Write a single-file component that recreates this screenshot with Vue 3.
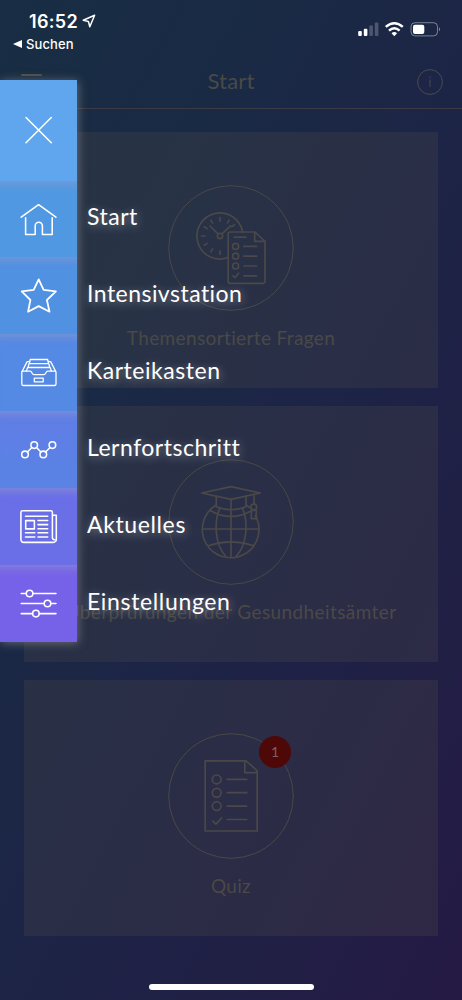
<template>
  <div class="screen">
    <header class="status-bar">
      <div class="status-left">
        <div class="clock">
          <span class="time">16:52</span>
          <svg class="location" width="14" height="14" viewBox="0 0 14 14">
            <path d="M12.6 1.3 1.2 6.2l5.2 1.3 1.4 5.3z" />
          </svg>
        </div>
        <div class="back">
          <svg width="9" height="8" viewBox="0 0 9 8"><path d="M0 4 9 0v8z" fill="#fff" /></svg>
          <span>Suchen</span>
        </div>
      </div>
      <svg class="status-icons" width="84" height="18" viewBox="0 0 84 18">
        <g fill="#fff">
          <rect x="0.2" y="10" width="3.6" height="5" rx="1" />
          <rect x="5.8" y="7.8" width="3.6" height="7.2" rx="1" />
          <rect x="11.3" y="4.6" width="3.6" height="10.4" rx="1" opacity="0.22" />
          <rect x="16.8" y="1.6" width="3.6" height="13.4" rx="1" opacity="0.22" />
          <path d="M36.3 15.2l-2.8-2.9q2.8-2.4 5.6 0z" />
        </g>
        <g fill="none" stroke="#fff" stroke-width="2.5">
          <path d="M27.8 5.9q8.5-7.2 17 0" />
          <path d="M31 9.6q5.3-4.8 10.6 0" />
        </g>
        <rect x="53" y="1.7" width="26.5" height="13.2" rx="4" fill="none" stroke="#fff" opacity="0.42" />
        <rect x="55" y="3.7" width="11.3" height="9.3" rx="2" fill="#fff" />
        <path d="M81 6.3q2 2 0 4z" fill="#fff" opacity="0.5" />
      </svg>
    </header>

    <nav class="title-bar">
      <span class="burger"></span>
      <h1>Start</h1>
      <svg class="info" width="28" height="28" viewBox="0 0 28 28">
        <circle cx="14" cy="14" r="12.4" />
        <path d="M14 11.5v7.5M14 8.6v1.4" />
      </svg>
    </nav>

    <main class="cards">
      <section v-for="card in cards" :key="card.title" class="card">
        <div class="emblem">
          <svg width="126" height="126" viewBox="0 0 126 126">
            <circle class="ring" cx="63" cy="63" r="62.3" />
            <template v-if="card.icon === 'topics'">
              <path d="M60.3 72.4A23 23 0 1 1 74.6 47" />
              <circle cx="52" cy="51" r="2.6" />
              <path d="M50.2 49.2 42 41M53.8 49.2l8.9-8.5" />
              <path
                v-for="tick in ticks"
                :key="tick"
                d="M52 32.7v3.4"
                :transform="`rotate(${tick} 52 51)`"
              />
              <path d="M62 47h25l10 9.3v40.2a1.8 1.8 0 0 1-1.8 1.8H62a1.8 1.8 0 0 1-1.8-1.8V48.8A1.8 1.8 0 0 1 62 47zM86.7 47v9.4H97" />
              <path d="M66.3 52.2h11.4" />
              <g v-for="y in [61.4, 71.2, 81]" :key="y">
                <circle cx="67.6" :cy="y" r="3" />
                <path :d="`M75.8 ${y}h12.8`" />
              </g>
              <path d="M65 90.6l2 2.1 3.6-4.3M75.8 90.8h12.8" />
            </template>
            <template v-else-if="card.icon === 'globe'">
              <path d="M33.7 34 63 27.7 92.3 34 63 40.3z" />
              <path d="M48.3 37.3v10.4Q63 53.8 78 47.7V37.3M63 40.3V98" />
              <path d="M48.3 46a28.3 28.3 0 1 0 39 10.5M78 46l4.6 3" />
              <path d="M34.7 70h56.6M42 51.4q21 11.8 41 0.6M40.3 86.7q22.7-7.5 45.4 0" />
              <path d="M51.6 49.6C46.4 62 46 85 58 97.5M74.6 49.6C79.8 62 80 85 68 97.5" />
              <path d="M86 35.6v9M83.3 51.5h5v8.2h-5z" />
              <circle cx="85.8" cy="48" r="2.9" />
            </template>
            <template v-else>
              <path d="M37.2 27.8H78l11.2 10V98h-52zM76.8 28v11.7h12.4" />
              <g v-for="y in [46.4, 59.7, 73.1]" :key="y">
                <circle cx="48.7" :cy="y" r="4.4" />
                <path :d="`M59.2 ${y}h19.5`" />
              </g>
              <path d="M44.8 88l3 3.2 5.8-6.2M59.2 86.5h19.5" />
            </template>
          </svg>
          <span v-if="card.badge" class="badge">{{ card.badge }}</span>
        </div>
        <h2 :style="{ letterSpacing: card.spacing + 'px' }">{{ card.title }}</h2>
      </section>
    </main>

    <aside class="menu">
      <div class="menu-row close-row">
        <button class="tile close" aria-label="Schließen">
          <svg width="77" height="100" viewBox="0 0 77 100">
            <path d="M26 37.5l25.3 25.3M51.3 37.5 26 62.8" />
          </svg>
        </button>
      </div>
      <div v-for="item in items" :key="item.label" class="menu-row">
        <button class="tile" :class="item.icon" :aria-label="item.label">
          <svg width="77" height="77" viewBox="0 0 77 77">
            <template v-if="item.icon === 'home'">
              <path d="M21.2 36.2 38.6 23.7l17.3 12.5" />
              <path d="M25.6 36.8v16.7h9.6V44.8a3.6 3.6 0 0 1 7.2 0v8.7h9.8V36.8" />
            </template>
            <path
              v-else-if="item.icon === 'star'"
              class="bold"
              d="M38.7 22.4l4.9 10.4 12.3 1.6-9 8.6 2.6 11.7-10.8-5.6-10.6 5.6 2.3-11.7-8.7-8.6 12-1.6z"
            />
            <template v-else-if="item.icon === 'box'">
              <path class="thin" d="M21.8 38.2a1 1 0 0 1 1-1h7.4c1.8 0 1.8 3.5 3.6 3.5H44c1.8 0 1.8-3.5 3.6-3.5h7.4a1 1 0 0 1 1 1v11.7a1.6 1.6 0 0 1-1.6 1.6h-31a1.6 1.6 0 0 1-1.6-1.6z" />
              <path class="thin" d="M22.2 37.3l4.8-9.4 2.5-.6M55.6 37.3l-4.8-9.4-2.5-.6" />
              <path class="thin" d="M29.3 29.7l1-4.2h17.3l1 4.2M28 33.5l1-3.8h19.8l1 3.8M26.4 37.1l1.2-3.6h22.6l1.2 3.6" />
              <path class="thin" d="M34.3 44.2h8.9v3.6h-8.9z" />
            </template>
            <template v-else-if="item.icon === 'progress'">
              <path d="M27.4 41l4.5-4.5M36.5 36.5l4.4 4.5M45.6 41l4.5-4.5" />
              <circle cx="25" cy="43.4" r="3.3" />
              <circle cx="34.2" cy="34.1" r="3.3" />
              <circle cx="43.3" cy="43.4" r="3.3" />
              <circle cx="52.4" cy="34.1" r="3.3" />
            </template>
            <template v-else-if="item.icon === 'news'">
              <path d="M52.4 27.2V24.4a1.6 1.6 0 0 0-1.6-1.6H22.5a1.6 1.6 0 0 0-1.6 1.6v27.2a2.8 2.8 0 0 0 2.8 2.8h29.6a3 3 0 0 0 3-3V27.2h-3.9v22.2q0 2.2 2.2 2.3" />
              <path d="M25.5 28.2h22.2M25.7 32.6h8.7v8.3h-8.7zM38 32.5h9.7M38 36.6h9.7M38 40.7h9.7M38 44.8h9.7M38 48.9h9.7M25.5 44.8h9.3M25.5 48.9h9.3" />
            </template>
            <template v-else>
              <path d="M21.2 28.5h5M32.9 28.5H56M21.2 38.5h23M50.8 38.5H56M21.2 48.6h11.4M39.2 48.6H56" />
              <circle cx="29.6" cy="28.5" r="3.3" />
              <circle cx="47.5" cy="38.5" r="3.3" />
              <circle cx="35.9" cy="48.6" r="3.3" />
            </template>
          </svg>
        </button>
        <span class="label" :style="{ letterSpacing: item.spacing + 'px' }">{{ item.label }}</span>
      </div>
    </aside>

    <div class="home-indicator"></div>
  </div>
</template>

<script setup>
const cards = [
  { title: 'Themensortierte Fragen', icon: 'topics', spacing: 0.37 },
  { title: 'Überprüfungen der Gesundheitsämter', icon: 'globe', spacing: 0.4 },
  { title: 'Quiz', icon: 'quiz', badge: 1, spacing: 0.3 }
]

const items = [
  { label: 'Start', icon: 'home', spacing: 0.5 },
  { label: 'Intensivstation', icon: 'star', spacing: 0.47 },
  { label: 'Karteikasten', icon: 'box', spacing: 0.55 },
  { label: 'Lernfortschritt', icon: 'progress', spacing: 0.5 },
  { label: 'Aktuelles', icon: 'news', spacing: 0.62 },
  { label: 'Einstellungen', icon: 'settings', spacing: 0.65 }
]

// clock marks, in degrees from 12 o'clock
const ticks = [0, 30, 52, 180, 210, 240, 270, 300, 330]
</script>

<style>
body {
  margin: 0;
  background: #1f2144;
}
</style>

<style scoped>
.screen {
  position: relative;
  width: 462px;
  height: 1000px;
  overflow: hidden;
  box-sizing: border-box;
  display: flex;
  flex-direction: column;
  font-family: Lato, 'Liberation Sans', sans-serif;
  background: linear-gradient(118deg, #182e43 0%, #1a2945 32%, #1f2145 68%, #251a44 100%);
}

.status-bar {
  display: flex;
  justify-content: space-between;
  height: 56px;
  color: #fff;
  font-family: Inter, 'Liberation Sans', sans-serif;
}

.status-left {
  padding: 9px 0 0 13px;
}

.clock {
  display: flex;
  align-items: center;
  gap: 4px;
  height: 25px;
  padding-left: 16px;
}

.time {
  font-size: 18px;
  font-weight: 600;
  letter-spacing: 0.3px;
}

.location {
  margin-top: -2px;
}

.location path {
  fill: none;
  stroke: #fff;
  stroke-width: 1.5;
  stroke-linejoin: round;
}

.back {
  display: flex;
  align-items: center;
  gap: 4px;
  height: 20px;
  font-size: 13px;
  font-weight: 500;
  letter-spacing: 0.1px;
}

.status-icons {
  margin: 21px 20px 0 0;
}

.title-bar {
  display: grid;
  grid-template-columns: 60px 1fr 60px;
  align-items: center;
  height: 52px;
  border-bottom: 1px solid #3b3a45;
}

.burger {
  align-self: start;
  width: 21px;
  height: 2px;
  margin: 18px 0 0 21px;
  border-radius: 1px;
  background: #4d4b4b;
}

h1,
h2 {
  margin: 0;
  font-weight: 400;
  color: #4a4947;
  text-align: center;
}

h1 {
  padding-bottom: 3px;
  font-size: 22px;
  letter-spacing: 0.2px;
}

.info {
  justify-self: end;
  margin: 0 18px 1px 0;
  fill: none;
  stroke: #4a4a50;
  stroke-width: 1;
}

.cards {
  display: flex;
  flex-direction: column;
  gap: 18px;
  padding: 22.5px 24px 0;
}

.card {
  display: flex;
  flex-direction: column;
  align-items: center;
  height: 256px;
  background: rgba(82, 78, 72, 0.26);
}

.emblem {
  position: relative;
  width: 126px;
  height: 126px;
  margin-top: 53.2px;
}

.emblem svg {
  display: block;
  fill: none;
  stroke: #4a4848;
  stroke-width: 1.7;
  stroke-linecap: round;
  stroke-linejoin: round;
}

.emblem .ring {
  stroke-width: 1;
}

.badge {
  position: absolute;
  top: 3px;
  right: 3px;
  width: 32px;
  height: 32px;
  border-radius: 50%;
  background: #4e0807;
  color: #80605e;
  font-size: 14px;
  line-height: 32px;
  text-align: center;
}

h2 {
  margin-top: 15.4px;
  font-size: 19px;
  line-height: 24px;
  white-space: nowrap;
}

.menu {
  position: absolute;
  top: 80px;
  left: 0;
  width: 77px;
  box-shadow: 1px 1px 9px rgba(175, 172, 165, 0.5);
}

.menu-row {
  display: flex;
  align-items: center;
  gap: 10px;
  height: 76.9px;
}

.close-row {
  height: 100.5px;
}

.tile {
  flex: none;
  width: 77px;
  height: 100%;
  padding: 0;
  border: 0;
  background: #5099e2;
  box-shadow: inset 0 12px 9px -9px rgba(150, 158, 200, 0.55);
}

.tile svg {
  display: block;
  fill: none;
  stroke: #fff;
  stroke-width: 1.55;
  stroke-linejoin: round;
  stroke-linecap: round;
}

.tile .bold {
  stroke-width: 1.8;
}

.tile .thin {
  stroke-width: 1.3;
}

.tile.close {
  background: #60a6ef;
  box-shadow: none;
}

.tile.star {
  background: #5091e2;
}

.tile.box {
  background: #5489e4;
}

.tile.progress {
  background: linear-gradient(#607de6, #5983e4);
}

.tile.news {
  background: #6a6fe8;
}

.tile.settings {
  background: #7662e8;
}

.label {
  padding-bottom: 5px;
  color: #fff;
  font-size: 23px;
  line-height: 30px;
  white-space: nowrap;
  text-shadow: 1px 2px 10px rgba(255, 255, 255, 0.42);
}

.home-indicator {
  position: absolute;
  left: 149px;
  bottom: 10px;
  width: 165px;
  height: 6px;
  border-radius: 3px;
  background: #fff;
}
</style>
